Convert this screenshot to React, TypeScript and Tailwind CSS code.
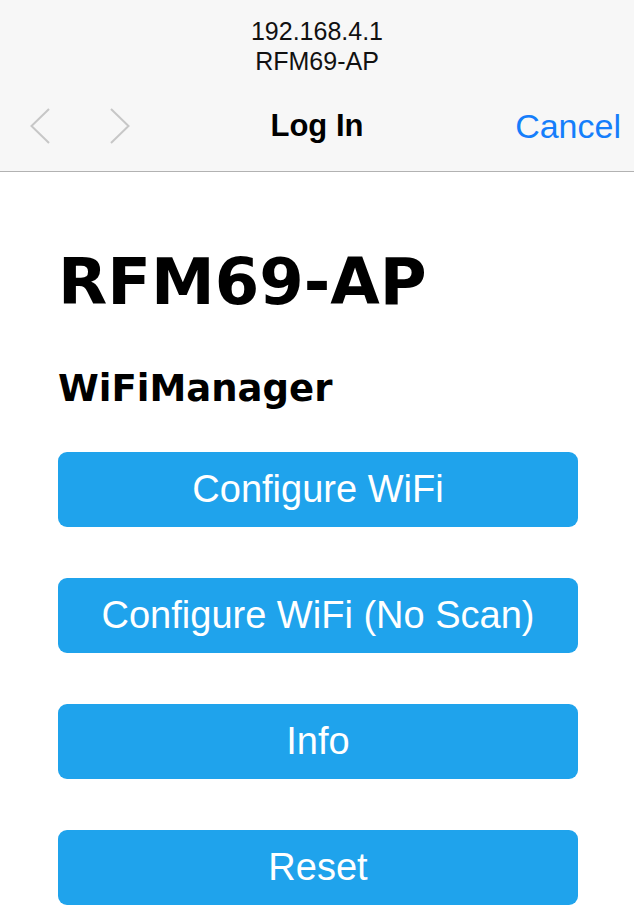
import React from "react";

const buttons = ["Configure WiFi", "Configure WiFi (No Scan)", "Info", "Reset"];

export default function App() {
  return (
    <div className="w-[634px] h-[923px] overflow-hidden bg-white">
      {/* barra superior */}
      <div className="h-[172px] bg-[#f7f7f7] border-b border-[#b2b2b2] flex flex-col font-['Liberation_Sans',sans-serif]">
        <div className="pt-[16px] flex flex-col items-center text-[25px] leading-[30px] text-[#111]">
          <span>192.168.4.1</span>
          <span>RFM69-AP</span>
        </div>
        <div className="mt-[29px] h-[42px] flex items-center relative pl-[30px] pr-[13px]">
          <svg width="20" height="36" viewBox="0 0 20 36" className="text-[#c7c7c7]">
            <path d="M19 1 L1.5 18 L19 35" fill="none" stroke="currentColor" strokeWidth="2" />
          </svg>
          <svg width="20" height="36" viewBox="0 0 20 36" className="ml-[60px] text-[#c7c7c7]">
            <path d="M1 1 L18.5 18 L1 35" fill="none" stroke="currentColor" strokeWidth="2" />
          </svg>
          <span className="absolute left-0 right-0 text-center text-[31px] font-bold text-black pointer-events-none">
            Log In
          </span>
          <span className="ml-auto text-[34px] text-[#157efb]">Cancel</span>
        </div>
      </div>

      {/* contenido */}
      <div className="px-[58px] pt-[70px] font-['DejaVu_Sans',sans-serif]">
        <h1 className="text-[64px] font-bold leading-[80px] text-black">RFM69-AP</h1>
        <h3 className="mt-[45px] text-[37px] font-bold leading-[44px] text-black">WiFiManager</h3>
        <div className="mt-[41px] flex flex-col gap-[51px]">
          {buttons.map((b) => (
            <button
              key={b}
              className="w-[520px] h-[75px] rounded-[9px] bg-[#1fa3ec] text-white text-[38px] font-['Liberation_Sans',sans-serif]"
            >
              {b}
            </button>
          ))}
        </div>
      </div>
    </div>
  );
}
